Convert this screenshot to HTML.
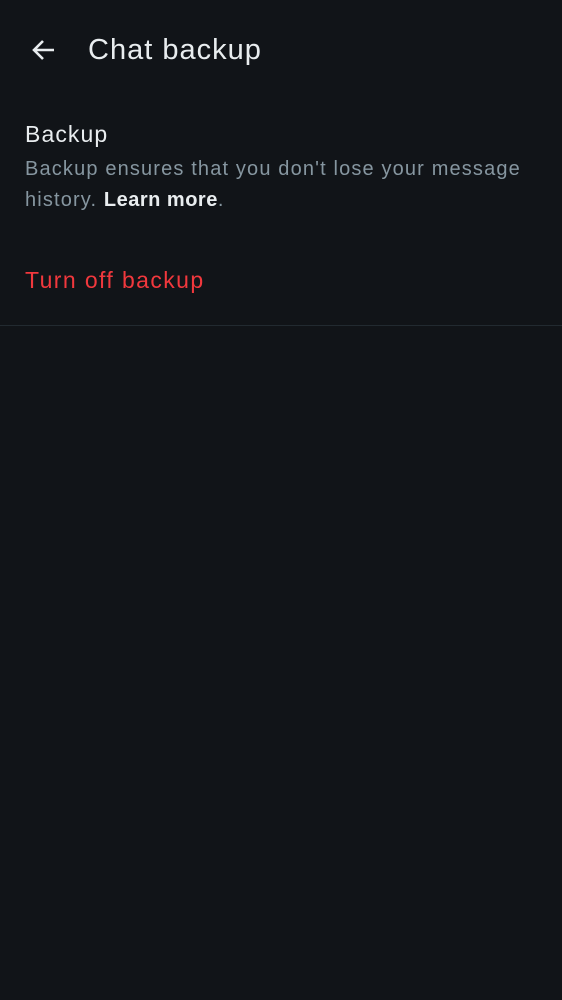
<!DOCTYPE html>
<html><head><style>
html,body{margin:0;padding:0;background:#111418;width:562px;height:1000px;overflow:hidden;font-family:"Liberation Sans",sans-serif;}
.t{position:absolute;white-space:nowrap;}
</style></head><body>
<svg style="position:absolute;left:30px;top:38px" width="26" height="24" viewBox="0 0 26 24"><path d="M24 12H4M13 3L4 12l9 9" stroke="#e9edef" stroke-width="2.6" fill="none"/></svg>
<div class="t" style="left:88px;top:34px;font-size:29px;color:#e9edef;letter-spacing:1px;">Chat backup</div>
<div class="t" style="left:25px;top:121px;font-size:23px;color:#e9edef;letter-spacing:1.1px;">Backup</div>
<div class="t" style="left:25px;top:154px;font-size:20px;color:#8696a0;line-height:31px;white-space:normal;width:510px;letter-spacing:1.15px;">Backup ensures that you don't lose your message history. <b style="color:#e9edef;letter-spacing:0.5px">Learn more</b>.</div>
<div class="t" style="left:25px;top:267px;font-size:23px;color:#f1383d;letter-spacing:1.4px;">Turn off backup</div>
<div style="position:absolute;left:0;top:325px;width:562px;height:1px;background:#222a30"></div>
</body></html>
